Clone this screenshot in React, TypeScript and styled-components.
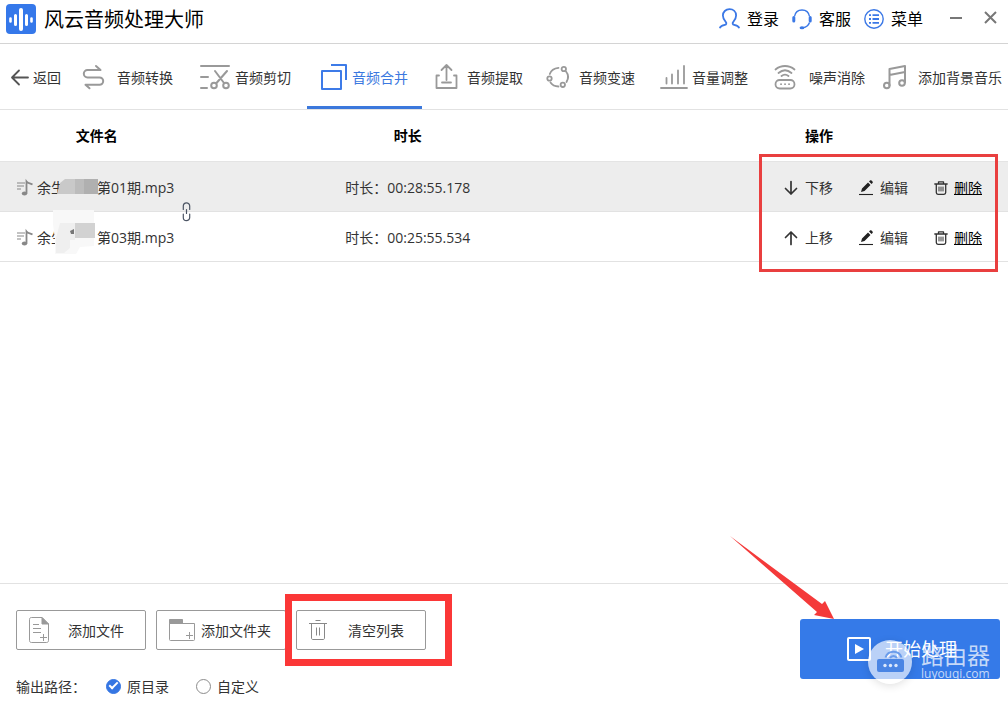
import React from "react";
import styled, { createGlobalStyle } from "styled-components";

const Global = createGlobalStyle`
  *, *::before, *::after { box-sizing: border-box; }
  body {
    margin: 0;
    background: #fff;
    color: #333;
    font-family: "Open Sans", "Noto Sans CJK SC", sans-serif;
    font-size: 14px;
    line-height: 20px;
  }
  button {
    font: inherit;
    color: inherit;
    background: none;
    border: 0;
    padding: 0;
    cursor: pointer;
  }
  svg { display: block; flex: none; overflow: visible; }
`;

const Page = styled.div`
  min-height: 100vh;
  display: flex;
  flex-direction: column;
  overflow: hidden;
`;

const TitleBar = styled.header`
  height: 44px;
  padding: 0 11px 6px 6px;
  display: flex;
  align-items: center;
  justify-content: space-between;
  border-bottom: 1px solid #d4d4d4;
  color: #000;
`;

const Brand = styled.h1`
  margin: 0;
  display: flex;
  align-items: center;
  gap: 8px;
  font-size: 20px;
  line-height: 28px;
  font-weight: 400;
`;

const HeaderActions = styled.div`
  display: flex;
  align-items: center;
  gap: 13px;
  font-size: 16px;
`;

const HeaderButton = styled.button`
  display: flex;
  align-items: center;
  gap: 7px;
`;

const WindowButtons = styled.div`
  display: flex;
  align-items: center;
  gap: 22px;
  margin-left: 14px;
`;

const Label = styled.span`
  padding-top: 2px;
`;

const Toolbar = styled.nav`
  height: 66px;
  display: grid;
  grid-template-columns: 69fr 118fr 120fr 115fr 112fr 113fr 114fr 109fr 138fr;
  border-bottom: 1px solid #e2e2e2;
`;

const BackButton = styled.button`
  display: flex;
  align-items: center;
  gap: 4px;
  padding-left: 11px;
  white-space: nowrap;
`;

const Tab = styled.button<{ $active?: boolean }>`
  display: flex;
  align-items: center;
  padding: 3px 0 0 13px;
  white-space: nowrap;
  border-bottom: 3px solid ${(p) => (p.$active ? "#3b78dc" : "transparent")};
  color: ${(p) => (p.$active ? "#3b78e0" : "#333")};
`;

const TabIcon = styled.span<{ $wide?: boolean }>`
  flex: none;
  width: ${(p) => (p.$wide ? 35 : 32)}px;
  color: #999;
`;

const Main = styled.main`
  flex: 1;
`;

const TableWrap = styled.div`
  position: relative;
`;

const FileTable = styled.table`
  width: 100%;
  table-layout: fixed;
  border-collapse: separate;
  border-spacing: 0;
`;

const HeadCell = styled.th<{ $width: string; $action?: boolean }>`
  width: ${(p) => p.$width};
  height: 52px;
  padding: 0 0 0 ${(p) => (p.$action ? 8 : 0)}px;
  color: #000;
  font-weight: 700;
  text-align: center;
  border-bottom: 1px solid #e4e4e4;
`;

const Row = styled.tr<{ $selected?: boolean }>`
  background: ${(p) => (p.$selected ? "#ededed" : "#fff")};
`;

const Cell = styled.td`
  height: 50px;
  padding: 2px 0 0;
  border-bottom: 1px solid #e2e2e2;
  text-align: center;
  white-space: nowrap;
`;

const FileName = styled.div`
  display: flex;
  align-items: center;
  padding-left: 17px;
`;

const NameText = styled.span`
  display: flex;
  margin-left: 4px;
`;

const Censor = styled.span`
  position: relative;
  width: 32px;

  svg {
    position: absolute;
    left: -12px;
    top: -18px;
  }
`;

const LinkMark = styled.span`
  position: absolute;
  left: 182px;
  top: 92px;
`;

const RowActions = styled.div`
  display: flex;
  justify-content: flex-end;
  gap: 26px;
  padding-right: 26px;
`;

const RowButton = styled.button<{ $underline?: boolean }>`
  display: flex;
  align-items: center;
  gap: 6px;
  color: ${(p) => (p.$underline ? "#000" : "#333")};

  span { text-decoration: ${(p) => (p.$underline ? "underline" : "none")}; }
`;

const TableFrame = styled.div`
  position: absolute;
  top: 44px;
  right: 10px;
  width: 239px;
  height: 118px;
  border: 3px solid #e93f3f;
  pointer-events: none;
`;

const Footer = styled.footer`
  display: flex;
  justify-content: space-between;
  align-items: flex-start;
  padding: 26px 8px 5px 16px;
  border-top: 1px solid #e2e2e2;
`;

const FooterLeft = styled.div`
  display: flex;
  flex-direction: column;
  gap: 25px;
`;

const ButtonRow = styled.div`
  display: flex;
  gap: 10px;
`;

const OutlineButton = styled.button<{ $tight?: boolean }>`
  width: 130px;
  height: 40px;
  display: flex;
  align-items: center;
  justify-content: space-between;
  padding: 0 ${(p) => (p.$tight ? 14 : 21)}px 0 12px;
  border: 1px solid #999;
  border-radius: 2px;
`;

const Framed = styled.div`
  position: relative;

  &::after {
    content: "";
    position: absolute;
    inset: -16px -26px -16px -11px;
    border: 7px solid #fb3737;
    pointer-events: none;
  }
`;

const OutputRow = styled.fieldset`
  margin: 0;
  padding: 0;
  border: 0;
  height: 22px;
  display: flex;
  align-items: center;
`;

const OutputLabel = styled(Label)`
  width: 90px;
`;

const RadioLabel = styled.label`
  display: flex;
  align-items: center;
  gap: 6px;
  margin-right: 27px;
`;

const Radio = styled.input`
  appearance: none;
  width: 15px;
  height: 15px;
  margin: 0;
  border: 1px solid #8c8c8c;
  border-radius: 50%;
  display: grid;
  place-items: center;

  &:checked {
    background: #3576e3;
    border-color: #3576e3;
  }

  &:checked::before {
    content: "";
    width: 9px;
    height: 5px;
    margin-bottom: 3px;
    border: solid #fff;
    border-width: 0 0 2px 2px;
    transform: rotate(-45deg);
  }
`;

const StartWrap = styled.div`
  position: relative;
  margin-top: 9px;
`;

const StartButton = styled.button`
  width: 200px;
  height: 60px;
  display: flex;
  align-items: center;
  justify-content: center;
  gap: 14px;
  padding-left: 4px;
  border-radius: 3px;
  background: #357ae8;
  color: #fff;
  font-size: 18px;
`;

const Arrow = styled.svg`
  position: absolute;
  left: -71px;
  top: -84px;
  pointer-events: none;
`;

const Watermark = styled.div`
  position: absolute;
  left: 68px;
  top: 21px;
  display: flex;
  align-items: center;
  gap: 9px;
  color: rgba(255, 255, 255, 0.72);
  pointer-events: none;
`;

const Badge = styled.div`
  border-radius: 50%;
  box-shadow: 0 2px 8px rgba(0, 0, 0, 0.12);
`;

const WatermarkText = styled.div`
  display: flex;
  flex-direction: column;
  font-size: 23px;
  line-height: 24px;
  white-space: nowrap;

  small {
    font-size: 12px;
    line-height: 14px;
  }
`;

const line = { fill: "none", stroke: "currentColor", strokeLinecap: "round", strokeLinejoin: "round" } as const;

const Logo = () => (
  <svg width="30" height="30" viewBox="0 0 30 30">
    <rect width="30" height="30" rx="4" fill="#3578ea" />
    <g stroke="#fff" strokeLinecap="round">
      <path d="M4.5 14.5v3M25.5 14.5v3" strokeWidth="2.6" />
      <path d="M9.5 11.5v9M20.5 11.5v9" strokeWidth="3" />
      <path d="M15 6v19" strokeWidth="4" />
    </g>
  </svg>
);

const UserIcon = () => (
  <svg width="21" height="21" viewBox="0 0 21 21" {...line} stroke="#3b78e6" strokeWidth="1.8">
    <path d="M1 19.5c.8-1.700 2.800-2.200 4.800-2.700 1.700-.4 2-1.700.9-2.900C4.700 11.900 3.900 10 3.900 7.600 3.900 3.800 6.700 1.200 10.500 1.200s6.600 2.600 6.600 6.400c0 2.400-.8 4.300-2.800 6.300-1.100 1.200-.8 2.500.9 2.900 2 .5 4 1 4.800 2.700" />
  </svg>
);

const HeadsetIcon = () => (
  <svg width="20" height="20" viewBox="0 0 20 20" fill="none" stroke="#3b78e6">
    <path d="M2.500 7.500C3.200 3.500 6 1 10 1s6.800 2.500 7.500 6.500" strokeWidth="1.4" />
    <path d="M1.800 8.500v3.500M18.200 8.500v3.500" strokeWidth="3" strokeLinecap="round" />
    <path d="M17.500 13.500c-1 3-3 4.700-6.500 5.200" strokeWidth="1.400" />
    <ellipse cx="10" cy="18.700" rx="2.400" ry="1.500" fill="#3b78e6" stroke="none" />
  </svg>
);

const MenuIcon = () => (
  <svg width="20" height="20" viewBox="0 0 20 20" fill="none" stroke="#3b78e6">
    <circle cx="10" cy="10" r="9.2" strokeWidth="1.4" />
    <path d="M5 6.200h2M5 10h2M5 13.800h2M8.500 6.200h6.500M8.500 10h6.500M8.500 13.800h6.500" strokeWidth="1.800" />
  </svg>
);

const MinimizeIcon = () => (
  <svg width="12" height="12" viewBox="0 0 12 12" stroke="#777" strokeWidth="2">
    <path d="M0 5h12" />
  </svg>
);

const CloseIcon = () => (
  <svg width="13" height="13" viewBox="0 0 13 13" stroke="#777" strokeWidth="2">
    <path d="M1 0l11 11M12 0L1 11" />
  </svg>
);

const BackIcon = () => (
  <svg width="18" height="16" viewBox="0 0 18 16" {...line} stroke="#555" strokeWidth="1.8">
    <path d="M17 8.500H1.500M8 1.500L1 8.500l7 7" />
  </svg>
);

const ConvertIcon = () => (
  <svg width="23" height="24" viewBox="0 0 23 24" {...line} strokeWidth="2">
    <path d="M14 1l4.500 4H5.500a3.700 3.700 0 0 0 0 7.400h12a3.700 3.700 0 0 1 0 7.400H3.500l4 3.500" />
  </svg>
);

const CutIcon = () => (
  <svg width="30" height="24" viewBox="0 0 30 24" {...line} strokeWidth="2">
    <path d="M1 1h28M1 12h7M1 23h6M15 6l9 12M27 6l-10.500 12" />
    <circle cx="14" cy="20.500" r="2.800" />
    <circle cx="26" cy="20.500" r="2.800" />
  </svg>
);

const MergeIcon = () => (
  <svg width="27" height="26" viewBox="0 0 27 26" fill="none" stroke="#3d7be8" strokeWidth="2" strokeLinejoin="round">
    <path d="M2 7h19v18H2z" />
    <path d="M11 1h15v15" />
  </svg>
);

const ExtractIcon = () => (
  <svg width="23" height="25" viewBox="0 0 23 25" {...line} strokeWidth="1.8">
    <path d="M4 11.500H1.500V24h20V11.500H19M11.500 16V1.500M6.500 6l5-5 5 5M7 18.500h9" />
  </svg>
);

const SpeedIcon = () => (
  <svg width="22" height="22" viewBox="0 0 22 22" {...line} strokeWidth="1.8">
    <path d="M2.800 8C4 4.500 7 2.200 11.500 1.800M19 5.500C21.500 8.500 21.600 12.500 19.500 16M11.500 20.500C7.500 20.400 5 18.800 3.500 16.500" />
    <circle cx="16.800" cy="3" r="2.200" />
    <circle cx="2.500" cy="12.500" r="2.200" />
    <circle cx="15.800" cy="18.800" r="2.200" />
  </svg>
);

const VolumeIcon = () => (
  <svg width="28" height="24" viewBox="0 0 28 24" {...line} strokeWidth="1.8">
    <path d="M1 23h26M6.500 13v5.500M12 9.500v9M18 5.500v13M24 1v17.500" />
  </svg>
);

const NoiseIcon = () => (
  <svg width="22" height="24" viewBox="0 0 22 24" {...line} strokeWidth="1.8">
    <rect x="1.500" y="15" width="19" height="8.500" rx="4.200" />
    <path d="M7 19.200h.1M11 19.200h.1M15 19.200h.1M1.500 4.500C7 -.2 15 -.2 20.500 4.500M4.500 8C8.500 4.600 13.500 4.600 17.500 8M7.500 11C9.800 9.200 12.200 9.200 14.500 11" />
  </svg>
);

const MusicIcon = () => (
  <svg width="23" height="24" viewBox="0 0 23 24" {...line} strokeWidth="2">
    <path d="M6.500 20.500V4L22 1v16.500M6.500 10L22 7" />
    <circle cx="3.800" cy="20.500" r="2.800" />
    <circle cx="19" cy="18" r="2.800" />
  </svg>
);

const TrackIcon = () => (
  <svg width="16" height="16" viewBox="0 0 16 16" fill="none" stroke="#888">
    <path d="M0 3h8M0 6h7M0 9h4" strokeWidth="1.1" />
    <path d="M9.500 13.500V1.500C11 3.500 13.500 3.500 15.500 4.500" strokeWidth="1.8" />
    <ellipse cx="7.500" cy="13.500" rx="2.700" ry="2" fill="#888" stroke="none" />
  </svg>
);

const ChainIcon = () => (
  <svg width="9" height="20" viewBox="0 0 9 20" {...line} stroke="#4c5564" strokeWidth="1.2">
    <path d="M1.300 7.500V4a3.200 3.200 0 0 1 6.400 0v3.500M1.300 12v3.500a3.200 3.200 0 0 0 6.400 0V12M4.500 7.500v4" />
  </svg>
);

const MoveIcon = ({ up }: { up: boolean }) => (
  <svg width="14" height="14" viewBox="0 0 14 14" {...line} stroke="#333" strokeWidth="1.7">
    <path d={up ? "M6 13.500V1M.5 6.500L6 1l5.500 5.500" : "M6 .5V13M.5 7.500L6 13l5.500-5.500"} />
  </svg>
);

const EditIcon = () => (
  <svg width="15" height="16" viewBox="0 0 15 16">
    <path d="M2 12l1-3.500L9 2.500l2.500 2.500-6 6zM10 1.600l1-1c.5-.5 1-.5 1.500 0l1 1c.5.5.5 1 0 1.500l-1 1z" fill="#222" />
    <path d="M0 14.500h14" stroke="#222" strokeWidth="1.1" />
  </svg>
);

const TrashIcon = () => (
  <svg width="14" height="14" viewBox="0 0 14 14" {...line} stroke="#333" strokeWidth="1.3">
    <path d="M.8 3h12.400M4.500 3V.8h5V3M2.300 3v8.500c0 1.200.6 1.800 1.700 1.800h6c1.100 0 1.700-.6 1.700-1.800V3" />
    <path d="M5 6v4M7 6v4M9 6v4" strokeWidth="1" />
  </svg>
);

const AddFileIcon = () => (
  <svg width="20" height="26" viewBox="0 0 20 26" fill="none" stroke="#999">
    <path d="M13 .5H2.500C1.200.5.5 1.200.5 2.500v21c0 1.300.7 2 2 2h15c1.300 0 2-.7 2-2V7z" />
    <path d="M13 .5V7h6.500z" fill="#999" />
    <path d="M4 7.500h6M4 11.500h8M4 15.500h8M11 20.500h7M14.500 17v7" />
  </svg>
);

const AddFolderIcon = () => (
  <svg width="26" height="22" viewBox="0 0 26 22" fill="none" stroke="#999">
    <path d="M.5 4.500h25v16c0 .7-.3 1-1 1h-23c-.7 0-1-.3-1-1z" />
    <path d="M.5 4.500v-4h13v4z" fill="#999" />
    <path d="M17 16.500h7M20.500 13v7" />
  </svg>
);

const ClearIcon = () => (
  <svg width="18" height="20" viewBox="0 0 18 20" fill="none" stroke="#888">
    <path d="M6.500.5h5M0 3.500h18M2.500 3.500V18c0 1 .5 1.500 1.500 1.500h10c1 0 1.500-.5 1.500-1.500V3.500M7.500 7.500v8M10.500 7.500v8" />
  </svg>
);

const PlayIcon = () => (
  <svg width="24" height="24" viewBox="0 0 24 24">
    <rect x="1" y="1" width="22" height="22" rx="1" fill="none" stroke="#fff" strokeWidth="2" />
    <path d="M8 7l9 5-9 5z" fill="#fff" />
  </svg>
);

const RouterBadge = () => (
  <svg width="44" height="44" viewBox="0 0 44 44">
    <circle cx="22" cy="22" r="22" fill="#fff" fillOpacity=".66" />
    <rect x="9" y="19" width="27" height="13" rx="2" fill="#4a85e4" />
    <path d="M17.500 17.500a8.500 8.500 0 0 1 16 0M22 18a4 4 0 0 1 7 0" fill="none" stroke="#6b9ceb" strokeWidth="2" />
    <g fill="#dce8fb">
      <circle cx="17" cy="25.500" r="1.700" />
      <circle cx="22.500" cy="25.500" r="1.700" />
      <circle cx="28" cy="25.500" r="1.700" />
    </g>
  </svg>
);

const MosaicDark = () => (
  <svg width="46" height="46" viewBox="0 0 46 46">
    <path d="M7 23l5-4h12v15H4z" fill="#c9c9c9" />
    <path d="M22 19h23v15H22z" fill="#bcbcbc" />
    <path d="M31 19h14v15H31z" fill="#b0b0b0" />
  </svg>
);

const MosaicLight = () => (
  <svg width="46" height="46" viewBox="0 0 46 46">
    <path d="M0 0h41v36l-14 1-4 7H2V30L0 14z" fill="#f8f8f8" />
    <path d="M7 13h15v17H17v8l-6 5H3V28z" fill="#efefef" />
    <path d="M17 21l4-2v5h-3z" fill="#777" />
    <path d="M22 13h20v15H22z" fill="#d2d2d2" />
  </svg>
);

const tabs = [
  { label: "音频转换", icon: <ConvertIcon />, wide: true },
  { label: "音频剪切", icon: <CutIcon />, wide: true },
  { label: "音频合并", icon: <MergeIcon />, active: true },
  { label: "音频提取", icon: <ExtractIcon /> },
  { label: "音频变速", icon: <SpeedIcon /> },
  { label: "音量调整", icon: <VolumeIcon /> },
  { label: "噪声消除", icon: <NoiseIcon />, wide: true },
  { label: "添加背景音乐", icon: <MusicIcon />, wide: true },
];

const files = [
  { tail: "第01期.mp3", mosaic: <MosaicDark />, duration: "00:28:55.178", up: false },
  { tail: "第03期.mp3", mosaic: <MosaicLight />, duration: "00:25:55.534", up: true },
];

export default function App() {
  return (
    <Page>
      <Global />
      <TitleBar>
        <Brand>
          <Logo />
          <Label>风云音频处理大师</Label>
        </Brand>
        <HeaderActions>
          <HeaderButton><UserIcon />登录</HeaderButton>
          <HeaderButton><HeadsetIcon />客服</HeaderButton>
          <HeaderButton><MenuIcon />菜单</HeaderButton>
          <WindowButtons>
            <button aria-label="最小化"><MinimizeIcon /></button>
            <button aria-label="关闭"><CloseIcon /></button>
          </WindowButtons>
        </HeaderActions>
      </TitleBar>

      <Toolbar>
        <BackButton><BackIcon /><Label>返回</Label></BackButton>
        {tabs.map((t) => (
          <Tab key={t.label} $active={t.active}>
            <TabIcon $wide={t.wide}>{t.icon}</TabIcon>
            <Label>{t.label}</Label>
          </Tab>
        ))}
      </Toolbar>

      <Main>
        <TableWrap>
          <FileTable>
            <thead>
              <tr>
                <HeadCell $width="19.2%">文件名</HeadCell>
                <HeadCell $width="42.5%">时长</HeadCell>
                <HeadCell $width="38.3%" $action>操作</HeadCell>
              </tr>
            </thead>
            <tbody>
              {files.map((f) => (
                <Row key={f.tail} $selected={!f.up}>
                  <Cell>
                    <FileName>
                      <TrackIcon />
                      <NameText>
                        余生<Censor>{f.mosaic}</Censor>{f.tail}
                      </NameText>
                    </FileName>
                  </Cell>
                  <Cell>时长：{f.duration}</Cell>
                  <Cell>
                    <RowActions>
                      <RowButton><MoveIcon up={f.up} /><span>{f.up ? "上移" : "下移"}</span></RowButton>
                      <RowButton><EditIcon /><span>编辑</span></RowButton>
                      <RowButton $underline><TrashIcon /><span>删除</span></RowButton>
                    </RowActions>
                  </Cell>
                </Row>
              ))}
            </tbody>
          </FileTable>
          <LinkMark><ChainIcon /></LinkMark>
          <TableFrame />
        </TableWrap>
      </Main>

      <Footer>
        <FooterLeft>
          <ButtonRow>
            <OutlineButton><AddFileIcon /><Label>添加文件</Label></OutlineButton>
            <OutlineButton $tight><AddFolderIcon /><Label>添加文件夹</Label></OutlineButton>
            <Framed>
              <OutlineButton><ClearIcon /><Label>清空列表</Label></OutlineButton>
            </Framed>
          </ButtonRow>
          <OutputRow aria-label="输出路径">
            <OutputLabel>输出路径：</OutputLabel>
            <RadioLabel><Radio type="radio" name="output" defaultChecked /><Label>原目录</Label></RadioLabel>
            <RadioLabel><Radio type="radio" name="output" /><Label>自定义</Label></RadioLabel>
          </OutputRow>
        </FooterLeft>
        <StartWrap>
          <StartButton><PlayIcon />开始处理</StartButton>
          <Watermark>
            <Badge><RouterBadge /></Badge>
            <WatermarkText>
              路由器
              <small>luyouqi.com</small>
            </WatermarkText>
          </Watermark>
          <Arrow width="106" height="84" viewBox="0 0 106 84">
            <path d="M1 1L93 69l3-3 9 18-20-4 3-3z" fill="#f43a3a" />
          </Arrow>
        </StartWrap>
      </Footer>
    </Page>
  );
}
